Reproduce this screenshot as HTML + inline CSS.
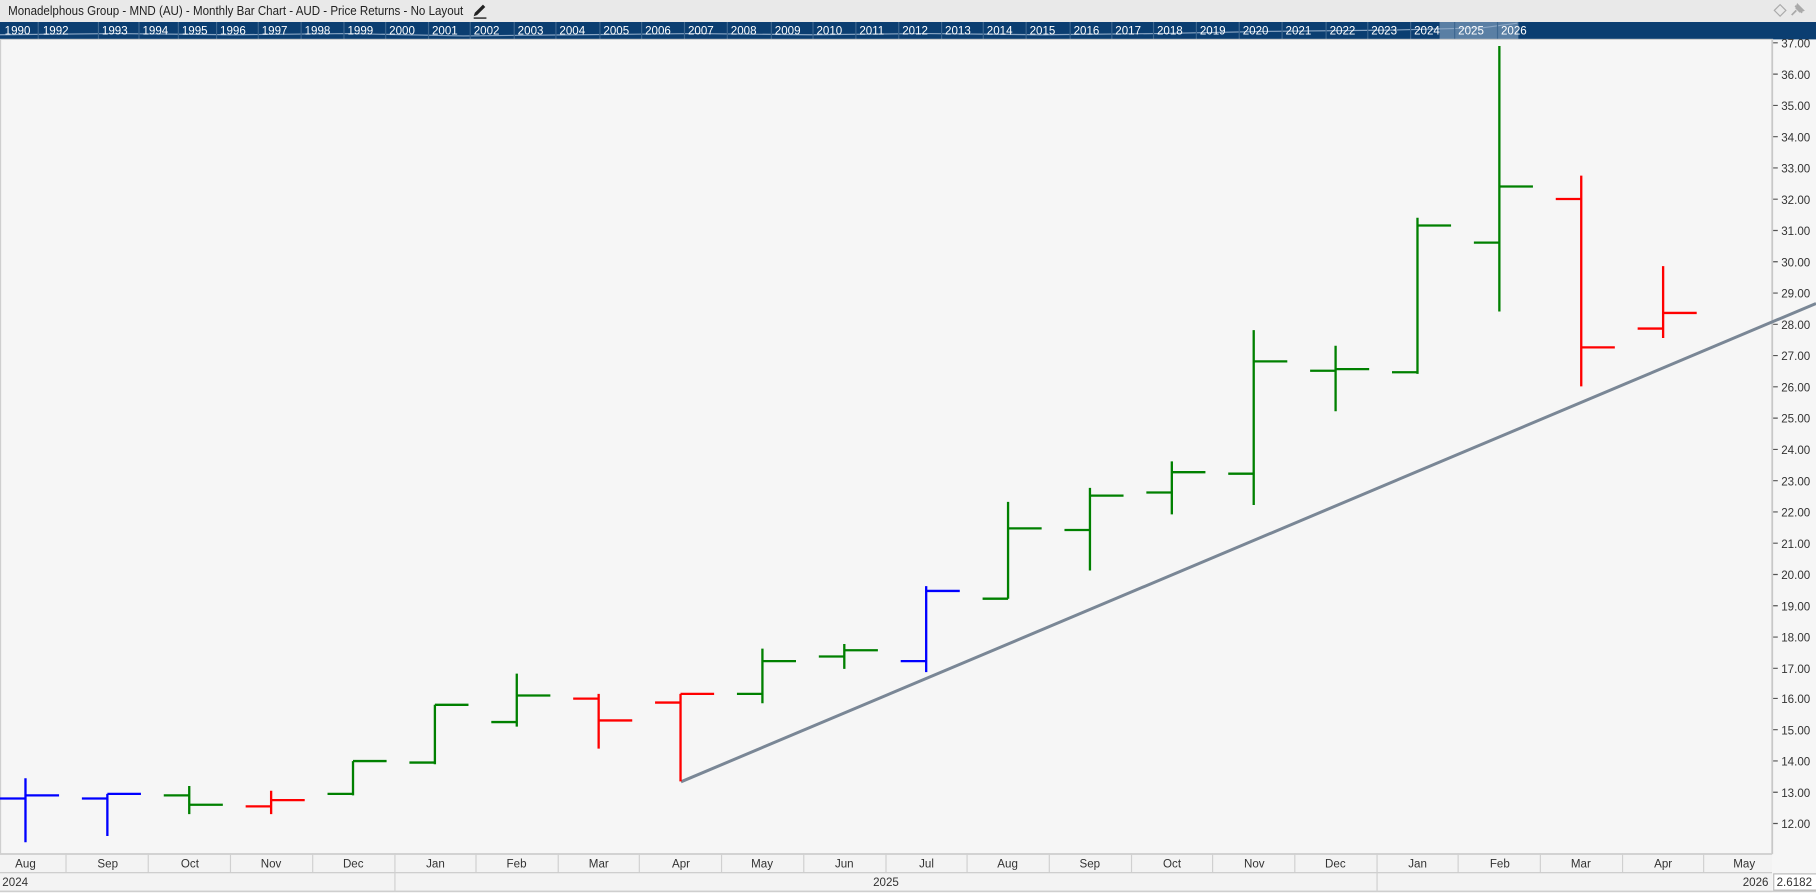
<!DOCTYPE html>
<html><head><meta charset="utf-8"><style>
html,body{margin:0;padding:0;width:1816px;height:893px;overflow:hidden;background:#f6f6f6}
svg{display:block}
text{font-family:"Liberation Sans",sans-serif}
</style></head><body>
<svg width="1816" height="893" viewBox="0 0 1568 771" preserveAspectRatio="none" xmlns="http://www.w3.org/2000/svg">
<rect x="0" y="0" width="1568" height="771" fill="#f6f6f6"/>
<!-- title bar -->
<rect x="0" y="0" width="1568" height="19" fill="#e9e9e9"/>
<text x="7" y="13" font-size="11" fill="#222" textLength="393" lengthAdjust="spacingAndGlyphs">Monadelphous Group - MND (AU) - Monthly Bar Chart - AUD - Price Returns - No Layout</text>
<g transform="translate(408,3)"><path d="M1 11 L2 8 L9 1 L11 3 L4 10 Z" fill="#222"/><rect x="1" y="12" width="11" height="1.2" fill="#222"/></g>
<path d="M1537 4 L1542 9 L1537 14 L1532 9 Z" fill="none" stroke="#aaa" stroke-width="1"/>
<path d="M1547 13 L1551 9 M1550 5 L1556 11 M1552 4 L1557 9 L1554 10 L1551 7 Z" stroke="#aaa" stroke-width="1.5" fill="#aaa"/>
<!-- navigator -->
<rect x="0" y="19" width="1568" height="15" fill="#0b3e71"/>
<rect x="1243" y="19" width="68" height="15" fill="#5a7fa4"/>
<path d="M0 30 L100 29 L200 30 L300 29 L400 31 L500 30 L600 29 L700 30 L800 29 L900 30 L1000 29 L1100 27 L1200 26 L1280 24 L1310 20" stroke="#8aa6c4" stroke-width="1" fill="none"/>
<g fill="#fff" font-size="10">
<text x="4" y="30">1990</text><text x="37" y="30">1992</text><text x="88" y="30">1993</text><text x="123" y="30">1994</text><text x="157" y="30">1995</text><text x="190" y="30">1996</text><text x="226" y="30">1997</text><text x="263" y="30">1998</text><text x="300" y="30">1999</text><text x="336" y="30">2000</text><text x="373" y="30">2001</text><text x="409" y="30">2002</text><text x="447" y="30">2003</text><text x="483" y="30">2004</text><text x="521" y="30">2005</text><text x="557" y="30">2006</text><text x="594" y="30">2007</text><text x="631" y="30">2008</text><text x="669" y="30">2009</text><text x="705" y="30">2010</text><text x="742" y="30">2011</text><text x="779" y="30">2012</text><text x="816" y="30">2013</text><text x="852" y="30">2014</text><text x="889" y="30">2015</text><text x="927" y="30">2016</text><text x="963" y="30">2017</text><text x="999" y="30">2018</text><text x="1036" y="30">2019</text><text x="1073" y="30">2020</text><text x="1110" y="30">2021</text><text x="1148" y="30">2022</text><text x="1184" y="30">2023</text><text x="1221" y="30">2024</text><text x="1259" y="30">2025</text><text x="1296" y="30">2026</text>
</g>
<g stroke="#3d6790" stroke-width="1">
<path d="M33 19V34M85 19V34M120 19V34M154 19V34M187 19V34M223 19V34M260 19V34M297 19V34M333 19V34M370 19V34M406 19V34M444 19V34M480 19V34M518 19V34M554 19V34M591 19V34M628 19V34M666 19V34M702 19V34M739 19V34M776 19V34M813 19V34M849 19V34M886 19V34M924 19V34M960 19V34M996 19V34M1033 19V34M1070 19V34M1107 19V34M1145 19V34M1181 19V34M1218 19V34M1256 19V34M1293 19V34"/>
</g>
<!-- chart border -->
<rect x="0.5" y="34" width="1530" height="703" fill="none" stroke="#cfcfcf" stroke-width="1"/>
<line x1="1530" y1="34" x2="1530" y2="737" stroke="#c4c4c4"/>
<!-- price axis -->
<g font-size="10" fill="#333">
<text x="1538" y="41">37.00</text><text x="1538" y="68">36.00</text><text x="1538" y="95">35.00</text><text x="1538" y="122">34.00</text><text x="1538" y="149">33.00</text><text x="1538" y="176">32.00</text><text x="1538" y="203">31.00</text><text x="1538" y="230">30.00</text><text x="1538" y="257">29.00</text><text x="1538" y="284">28.00</text><text x="1538" y="311">27.00</text><text x="1538" y="338">26.00</text><text x="1538" y="365">25.00</text><text x="1538" y="392">24.00</text><text x="1538" y="419">23.00</text><text x="1538" y="446">22.00</text><text x="1538" y="473">21.00</text><text x="1538" y="500">20.00</text><text x="1538" y="527">19.00</text><text x="1538" y="554">18.00</text><text x="1538" y="581">17.00</text><text x="1538" y="607">16.00</text><text x="1538" y="634">15.00</text><text x="1538" y="661">14.00</text><text x="1538" y="688">13.00</text><text x="1538" y="715">12.00</text>
</g>
<g stroke="#555" stroke-width="1">
<path d="M1531 37H1535M1531 64H1535M1531 91H1535M1531 118H1535M1531 145H1535M1531 172H1535M1531 199H1535M1531 226H1535M1531 253H1535M1531 280H1535M1531 307H1535M1531 334H1535M1531 361H1535M1531 388H1535M1531 415H1535M1531 442H1535M1531 469H1535M1531 496H1535M1531 523H1535M1531 550H1535M1531 577H1535M1531 603H1535M1531 630H1535M1531 657H1535M1531 684H1535M1531 711H1535"/>
</g>
<!-- trendline -->
<line x1="588" y1="675" x2="1568" y2="262" stroke="#7a8796" stroke-width="2.6"/>
<!-- bars -->
<g stroke-width="2" fill="none">
<path stroke="#0000ff" d="M22 671.9V727.2M0 689.4H22M22 686.7H51"/>
<path stroke="#0000ff" d="M92.7 685.4V721.8M70.7 689.4H92.7M92.7 685.4H121.7"/>
<path stroke="#008000" d="M163.4 678.6V702.9M141.4 686.7H163.4M163.4 694.8H192.4"/>
<path stroke="#ff0000" d="M234.1 682.7V702.9M212.1 696.2H234.1M234.1 690.8H263.1"/>
<path stroke="#008000" d="M304.8 657.1V686.7M282.8 685.4H304.8M304.8 657.1H333.8"/>
<path stroke="#008000" d="M375.5 608.5V659.8M353.5 658.4H375.5M375.5 608.5H404.5"/>
<path stroke="#008000" d="M446.2 581.6V627.4M424.2 623.4H446.2M446.2 600.5H475.2"/>
<path stroke="#ff0000" d="M516.9 599.1V646.3M494.9 603.2H516.9M516.9 622H545.9"/>
<path stroke="#ff0000" d="M587.6 599.1V674.6M565.6 606.6H587.6M587.6 599.1H616.6"/>
<path stroke="#008000" d="M658.3 560V607.2M636.3 599.1H658.3M658.3 570.8H687.3"/>
<path stroke="#008000" d="M729 556V577.5M707 566.8H729M729 561.4H758"/>
<path stroke="#0000ff" d="M799.7 506.1V580.3M777.7 570.8H799.7M799.7 510.2H828.7"/>
<path stroke="#008000" d="M870.4 433.3V516.9M848.4 516.9H870.4M870.4 456.2H899.4"/>
<path stroke="#008000" d="M941.1 421.2V492.6M919.1 457.6H941.1M941.1 427.9H970.1"/>
<path stroke="#008000" d="M1011.8 398.3V444.1M989.8 425.2H1011.8M1011.8 407.7H1040.8"/>
<path stroke="#008000" d="M1082.5 285V436M1060.5 409H1082.5M1082.5 312H1111.5"/>
<path stroke="#008000" d="M1153.2 298.5V355.1M1131.2 320.1H1153.2M1153.2 318.7H1182.2"/>
<path stroke="#008000" d="M1223.9 188V322.8M1201.9 321.4H1223.9M1223.9 194.7H1252.9"/>
<path stroke="#008000" d="M1294.6 39.7V268.9M1272.6 209.5H1294.6M1294.6 161H1323.6"/>
<path stroke="#ff0000" d="M1365.3 151.6V333.6M1343.3 171.8H1365.3M1365.3 299.9H1394.3"/>
<path stroke="#ff0000" d="M1436 229.8V291.8M1414 283.7H1436M1436 270.2H1465"/>
</g>
<!-- time axis -->
<rect x="0" y="737" width="1530" height="34" fill="#f3f3f3"/>
<line x1="0" y1="737.5" x2="1530" y2="737.5" stroke="#c8c8c8"/>
<line x1="0" y1="753.5" x2="1530" y2="753.5" stroke="#c8c8c8"/>
<line x1="0" y1="769.5" x2="1568" y2="769.5" stroke="#c8c8c8"/>
<g stroke="#d0d0d0" stroke-width="1">
<path d="M57 737V753M128 737V753M199 737V753M270 737V753M341 737V753M411 737V753M482 737V753M552 737V753M623 737V753M694 737V753M765 737V753M835 737V753M906 737V753M977 737V753M1047 737V753M1118 737V753M1189 737V753M1259 737V753M1330 737V753M1401 737V753M1471 737V753"/>
<path d="M341 753V770M1189 753V770"/>
</g>
<g font-size="10" fill="#333" text-anchor="middle">
<text x="22" y="749">Aug</text><text x="93" y="749">Sep</text><text x="164" y="749">Oct</text><text x="234" y="749">Nov</text><text x="305" y="749">Dec</text><text x="376" y="749">Jan</text><text x="446" y="749">Feb</text><text x="517" y="749">Mar</text><text x="588" y="749">Apr</text><text x="658" y="749">May</text><text x="729" y="749">Jun</text><text x="800" y="749">Jul</text><text x="870" y="749">Aug</text><text x="941" y="749">Sep</text><text x="1012" y="749">Oct</text><text x="1083" y="749">Nov</text><text x="1153" y="749">Dec</text><text x="1224" y="749">Jan</text><text x="1295" y="749">Feb</text><text x="1365" y="749">Mar</text><text x="1436" y="749">Apr</text><text x="1506" y="749">May</text>
</g>
<g font-size="10" fill="#333">
<text x="2" y="765">2024</text>
<text x="765" y="765" text-anchor="middle">2025</text>
<text x="1527" y="765" text-anchor="end">2026</text>
</g>
<rect x="1531.5" y="754.5" width="40" height="14" fill="#fff" stroke="#bbb"/>
<text x="1534" y="765" font-size="10" fill="#333">2.6182</text>
</svg>
</body></html>
